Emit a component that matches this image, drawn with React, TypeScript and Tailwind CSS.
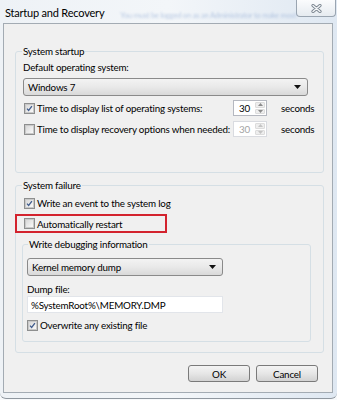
import React from "react";

function Check({ checked }: { checked?: boolean }) {
  return (
    <span className="flex h-[11px] w-[11px] shrink-0 items-center justify-center border border-[#8e8f8f] bg-[#f4f4f4]">
      <span className="flex h-[9px] w-[9px] items-center justify-center border border-[#c9c9c9] bg-gradient-to-br from-[#d8d8d8] to-[#fafafa]">
        {checked ? (
          <svg width="9" height="9" viewBox="0 0 9 9">
            <path d="M1.3 4.6 L3.4 7 L7.6 1.4" fill="none" stroke="#3f5b8c" strokeWidth="1.6" />
          </svg>
        ) : null}
      </span>
    </span>
  );
}

function Arrow() {
  return (
    <svg width="7" height="4" viewBox="0 0 7 4">
      <path d="M0 0 H7 L3.5 4 Z" fill="#111" />
    </svg>
  );
}

function Combo({ value, width }: { value: string; width: string }) {
  return (
    <div
      className={`flex h-[18px] items-center justify-between rounded-[3px] border border-[#8a8a8a] bg-gradient-to-b from-[#f3f3f3] via-[#e9e9e9] to-[#d9d9d9] pl-[4px] pr-[6px] ${width}`}
    >
      <span className="leading-[14px]">{value}</span>
      <Arrow />
    </div>
  );
}

function Spin({ disabled }: { disabled?: boolean }) {
  return (
    <div
      className={`flex h-[16px] w-[34px] shrink-0 border bg-white ${disabled ? "border-[#d9dbe0]" : "border-[#b5b8c0]"}`}
    >
      <span className={`flex-1 pl-[5px] leading-[14px] ${disabled ? "text-[#a3a3a3]" : "text-[#000]"}`}>30</span>
      <div className="my-[1px] mr-[1px] flex w-[10px] flex-col gap-[1px]">
        <div className="flex flex-1 items-center justify-center rounded-[1px] border border-[#dcdcdc] bg-[#eeeeee]">
          <svg width="5" height="3" viewBox="0 0 5 3">
            <path d="M0 3 H5 L2.5 0 Z" fill={disabled ? "#c4c4c4" : "#8c8c8c"} />
          </svg>
        </div>
        <div className="flex flex-1 items-center justify-center rounded-[1px] border border-[#dcdcdc] bg-[#eeeeee]">
          <svg width="5" height="3" viewBox="0 0 5 3">
            <path d="M0 0 H5 L2.5 3 Z" fill={disabled ? "#c4c4c4" : "#8c8c8c"} />
          </svg>
        </div>
      </div>
    </div>
  );
}

function Legend({ title, indent }: { title: string; indent: string }) {
  return <div className={`-mt-[8px] w-fit bg-[#f0f0f0] px-[1px] leading-[14px] ${indent}`}>{title}</div>;
}

function Button({ label }: { label: string }) {
  return (
    <button
      type="button"
      className="flex h-[17px] w-[62px] items-center justify-center rounded-[3px] border border-[#7a7a7a] bg-gradient-to-b from-[#f4f4f4] via-[#e6e6e6] to-[#d2d2d2] leading-[14px] text-[#000]"
    >
      {label}
    </button>
  );
}

export default function App() {
  return (
    <div className="h-[400px] w-[337px] overflow-hidden bg-[#f7f9fb] font-['Lato',sans-serif] text-[9.8px] tracking-[-0.2px] text-[#000]">
      <div className="h-[399px] rounded-b-[6px] border-b border-[#8f979f] bg-gradient-to-r from-[#eef2f6] via-[#f3f6f9] to-[#dfe8f2]">
        {/* title bar */}
        <div className="flex h-[23px]">
          <div className="shrink-0 whitespace-nowrap pl-[5px] pt-[5px] text-[11px] leading-[16px] text-[#000]">
            Startup and Recovery
          </div>
          <div className="ml-[16px] mt-[11px] whitespace-nowrap text-[7.5px] leading-[10px] text-[#7d9ccc] opacity-50 blur-[1px]">
            You must be logged on as an Administrator to make most
          </div>
          <div className="ml-auto mr-[4px] flex h-[17px] w-[40px] shrink-0 items-center justify-center rounded-b-[4px] border border-t-0 border-[#9aa5b1] bg-gradient-to-b from-[#fbfcfd] to-[#e6ebf0]">
            <svg width="11" height="9" viewBox="0 0 11 9">
              <path d="M2 1.5 L9 7.5 M9 1.5 L2 7.5" stroke="#7b8590" strokeWidth="3.2" strokeLinecap="round" />
              <path d="M2 1.5 L9 7.5 M9 1.5 L2 7.5" stroke="#f4f6f8" strokeWidth="1.4" strokeLinecap="round" />
            </svg>
          </div>
        </div>

        {/* client panel */}
        <div className="ml-[3px] w-[330px] border border-[#a3abb3] bg-[#f0f0f0] pb-[10px]">
          {/* System startup */}
          <div className="ml-[11px] mt-[27px] w-[309px] rounded-[3px] border border-[#d5dfe5] pb-[35px] pl-[7px]">
            <Legend title="System startup" indent="-ml-[1px]" />
            <div className="mt-[2px] leading-[14px]">Default operating system:</div>
            <div className="mt-[4px]">
              <Combo value="Windows 7" width="w-[285px]" />
            </div>
            <div className="mt-[4px] flex h-[16px] items-center">
              <span className="ml-[1px]">
                <Check checked />
              </span>
              <span className="ml-[2px] w-[196px] whitespace-nowrap leading-[14px]">
                Time to display list of operating systems:
              </span>
              <Spin />
              <span className="ml-[14px] leading-[14px]">seconds</span>
            </div>
            <div className="mt-[5px] flex h-[16px] items-center">
              <span className="ml-[1px]">
                <Check />
              </span>
              <span className="ml-[2px] w-[196px] whitespace-nowrap leading-[14px]">
                Time to display recovery options when needed:
              </span>
              <Spin disabled />
              <span className="ml-[14px] leading-[14px]">seconds</span>
            </div>
          </div>

          {/* System failure */}
          <div className="ml-[11px] mt-[12px] w-[309px] rounded-[3px] border border-[#d5dfe5] pb-[10px]">
            <Legend title="System failure" indent="ml-[6px]" />
            <div className="ml-[8px] mt-[3px] flex h-[16px] items-center">
              <Check checked />
              <span className="ml-[2px] leading-[14px]">Write an event to the system log</span>
            </div>
            <div className="-ml-[1px] mt-[3px] flex h-[19px] w-[152px] items-center border-2 border-[#d3232e] pl-[7px]">
              <Check />
              <span className="ml-[2px] leading-[14px]">Automatically restart</span>
            </div>

            {/* Write debugging information */}
            <div className="ml-[6px] mt-[11px] w-[289px] rounded-[3px] border border-[#d5dfe5] pb-[8px] pl-[4px]">
              <Legend title="Write debugging information" indent="ml-[1px]" />
              <div className="mt-[7px]">
                <Combo value="Kernel memory dump" width="w-[196px]" />
              </div>
              <div className="mt-[6px] leading-[14px]">Dump file:</div>
              <div className="flex h-[17px] w-[196px] items-center border border-[#e2e5ea] bg-white pl-[3px] leading-[14px]">
                %SystemRoot%\MEMORY.DMP
              </div>
              <div className="mt-[4px] flex h-[16px] items-center">
                <Check checked />
                <span className="ml-[2px] leading-[14px]">Overwrite any existing file</span>
              </div>
            </div>
          </div>

          {/* buttons */}
          <div className="mt-[12px] flex justify-end gap-[6px] pr-[14px]">
            <Button label="OK" />
            <Button label="Cancel" />
          </div>
        </div>
      </div>
    </div>
  );
}
